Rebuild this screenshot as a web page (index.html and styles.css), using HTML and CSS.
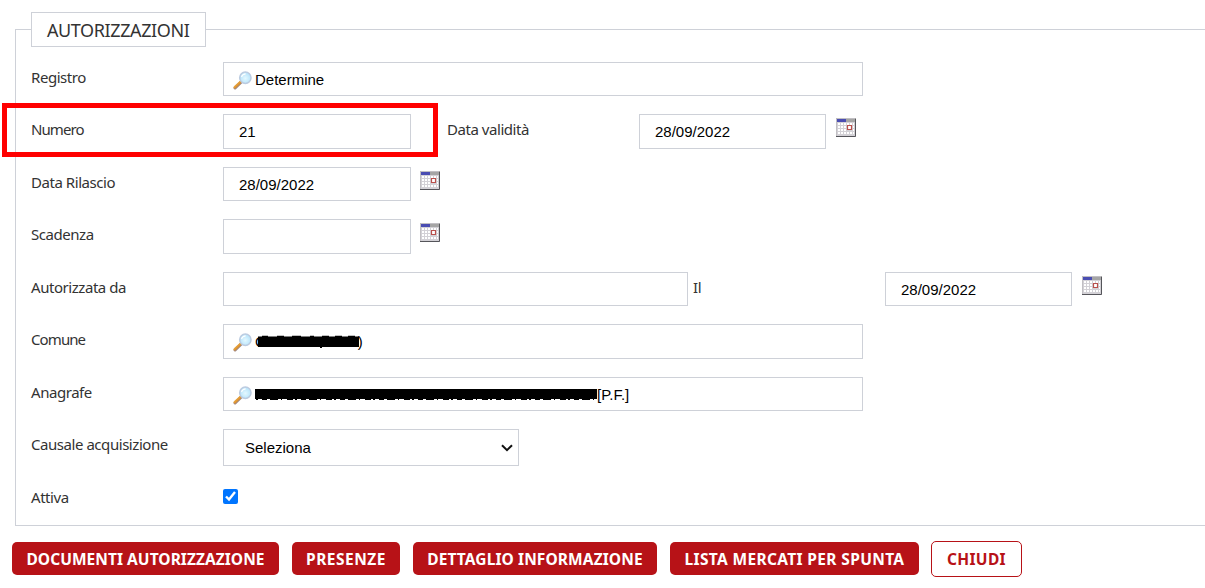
FILE: index.html
```html
<!DOCTYPE html>
<html lang="it">
<head>
<meta charset="utf-8">
<title>Autorizzazioni</title>
<link rel="stylesheet" href="styles.css">
</head>
<body>
<svg class="defs" width="0" height="0" aria-hidden="true">
  <defs>
    <linearGradient id="handle" x1="0" y1="0" x2="1" y2="1"><stop offset="0" stop-color="#f6c86d"/><stop offset=".55" stop-color="#e0952f"/><stop offset="1" stop-color="#a8713f"/></linearGradient>
    <radialGradient id="lens" cx=".5" cy=".55" r=".6"><stop offset="0" stop-color="#e4f8ff"/><stop offset="1" stop-color="#aee0fa"/></radialGradient>
    <symbol id="search" viewBox="0 0 18 18">
      <path d="M2 16L7.6 10.6" stroke="#a08a88" stroke-width="3" stroke-linecap="round"/>
      <path d="M1.7 15.4L7.4 10" stroke="url(#handle)" stroke-width="2.4" stroke-linecap="round"/>
      <circle cx="11.7" cy="6.4" r="5.4" fill="url(#lens)" stroke="#bccbe0" stroke-width="1.4"/>
      <path d="M8 5.7Q9 2.7 12 2.7" fill="none" stroke="#fff" stroke-width="1"/>
    </symbol>
    <symbol id="calendar" viewBox="0 0 20 19">
      <path fill="#d3d1d6" d="M0 0h20v19H0z"/>
      <path fill="#fff" d="M2 5h2v2H2zm3 0h2v2H5zm3 0h2v2H8zm3 0h2v2h-2zm3 0h2v2h-2zm3 0h1v2h-1zM2 8h2v2H2zm3 0h2v2H5zm3 0h2v2H8zm9 0h1v2h-1zM2 11h2v2H2zm3 0h2v2H5zm3 0h2v2H8zm9 0h1v2h-1zM2 14h2v2H2zm3 0h2v2H5zm3 0h2v2H8zm3 0h2v2h-2zm3 0h2v2h-2zm3 0h1v2h-1z"/>
      <path fill="#a5a5a5" d="M0 0h20v4H0z"/>
      <path fill="#4a4db2" d="M1 1h9v3H1z"/>
      <path fill="#fff" stroke="#b9504c" stroke-width="1.2" d="M11.5 7.5h4v4h-4z"/>
      <path fill="none" stroke="#c1bfc3" d="M.5 19V.5H19"/>
      <path fill="none" stroke="#55555a" d="M0 18.5h19.5V1"/>
    </symbol>
  </defs>
</svg>

<fieldset class="panel">
  <legend class="panel-title"><span>AUTORIZZAZIONI</span></legend>

  <div class="row">
    <label class="label">Registro</label>
    <div class="field lookup"><svg class="search"><use href="#search"/></svg><span>Determine</span></div>
  </div>

  <div class="row">
    <label class="label tight" for="numero">Numero</label>
    <input id="numero" class="field short raised" value="21">
    <label class="label second" for="validita">Data validità</label>
    <input id="validita" class="field date raised" value="28/09/2022">
    <svg class="calendar after-date"><use href="#calendar"/></svg>
    <div class="highlight"></div>
  </div>

  <div class="row">
    <label class="label" for="rilascio">Data Rilascio</label>
    <input id="rilascio" class="field short" value="28/09/2022">
    <svg class="calendar"><use href="#calendar"/></svg>
  </div>

  <div class="row">
    <label class="label" for="scadenza">Scadenza</label>
    <input id="scadenza" class="field short">
    <svg class="calendar"><use href="#calendar"/></svg>
  </div>

  <div class="row">
    <label class="label" for="autorizzata">Autorizzata da</label>
    <input id="autorizzata" class="field medium">
    <label class="label il" for="il">Il</label>
    <input id="il" class="field date" value="28/09/2022">
    <svg class="calendar after-date"><use href="#calendar"/></svg>
  </div>

  <div class="row">
    <label class="label tight">Comune</label>
    <div class="field lookup"><svg class="search"><use href="#search"/></svg><span class="masked">G<svg class="mask town" viewBox="0 0 101 13"><path d="M0 1.5h4v-.8h6v.8h9v-.8h7v.8h8v-.8h9v.8h9v-.8h4v.8h8v-.8h7v.8h6v-.8h7v.8h6v-.8h7v.8h4V12H64v1h-2v-1H0z"/></svg>)</span></div>
  </div>

  <div class="row">
    <label class="label">Anagrafe</label>
    <div class="field lookup"><svg class="search"><use href="#search"/></svg><span class="masked"><svg class="mask person" viewBox="0 0 342 13"><path d="M0 1h342v10H0z"/><path d="M1 11.5h340" stroke="#000" stroke-dasharray="2 4 5 3 8 3 1 5 6 2" /></svg>[P.F.]</span></div>
  </div>

  <div class="row">
    <label class="label" for="causale">Causale acquisizione</label>
    <div class="select-wrap">
      <select id="causale" class="field select"><option>Seleziona</option></select>
      <svg class="chevron" viewBox="0 0 12 8"><path d="M1 1.2L6 6.2L11 1.2" fill="none" stroke="#111" stroke-width="2"/></svg>
    </div>
  </div>

  <div class="row">
    <label class="label" for="attiva">Attiva</label>
    <input id="attiva" class="check" type="checkbox" checked>
  </div>
</fieldset>

<div class="actions">
  <button class="btn b-doc">DOCUMENTI AUTORIZZAZIONE</button>
  <button class="btn b-pres">PRESENZE</button>
  <button class="btn b-info">DETTAGLIO INFORMAZIONE</button>
  <button class="btn b-list">LISTA MERCATI PER SPUNTA</button>
  <button class="btn outline">CHIUDI</button>
</div>
</body>
</html>
```
FILE: styles.css
```css
* { box-sizing: border-box; }

body {
  margin: 0;
  height: 588px;
  overflow: hidden;
  background: #fff;
  color: #333;
  font-family: Tahoma, "Noto Sans", sans-serif;
  font-size: 15px;
}

.defs { display: block; height: 0; }

.panel {
  width: 1220px;
  height: 514px;
  margin: 12px 0 0 15px;
  padding: 14.9px 15px;
  border: 1px solid #ced1d8;
}

.panel-title {
  width: 175px;
  height: 35px;
  padding: 0 0 0 15px;
  border: 1px solid #ced1d8;
  font-size: 18px;
  line-height: 35px;
  white-space: nowrap;
  letter-spacing: -0.4px;
}

.row {
  position: relative;
  display: flex;
  align-items: flex-start;
  height: 52.5px;
}

.label {
  flex: none;
  width: 192px;
  line-height: 31px;
  letter-spacing: -0.45px;
  white-space: nowrap;
}

.tight { letter-spacing: -0.9px; }
.second { margin-left: 36px; }
.il { margin-left: 5px; }

.field {
  flex: none;
  height: 34.5px;
  margin: 0;
  padding: 1px 15px 0;
  border: 1px solid #ced1d8;
  border-radius: 0;
  background: #fff;
  color: #000;
  font: 15px "Liberation Sans", Arial, sans-serif;
}

.short { width: 188px; }
.date { width: 187px; }
.medium { width: 465px; }
.raised { padding-top: 0; }

.lookup {
  display: flex;
  align-items: center;
  gap: 3px;
  width: 640px;
  padding: 0 9px;
}

.search { width: 19px; height: 19px; margin-top: 2px; }

.masked { display: flex; align-items: center; }
.mask { display: block; height: 13px; }
.town { width: 101px; margin: 0 -1px 0 -9px; }
.person { width: 342px; }

.calendar { flex: none; width: 20px; height: 19px; margin: 4px 0 0 9px; }
.after-date { margin-left: 10px; }

.select-wrap { position: relative; width: 296px; }
.select { display: block; width: 296px; height: 37px; padding: 0 0 0 21px; appearance: none; }

.chevron {
  position: absolute;
  top: 15px;
  right: 6px;
  width: 12px;
  height: 8px;
  pointer-events: none;
}

.check { width: 15px; height: 15px; margin: 7px 0 0; accent-color: #0075ff; }

.highlight {
  position: absolute;
  top: -11.4px;
  left: -29px;
  width: 436px;
  height: 54px;
  border: 5px solid #f00;
}

.actions {
  display: flex;
  align-items: flex-start;
  gap: 13px;
  margin: 15px 0 0 12px;
}

.btn {
  height: 33px;
  margin: 1px 0 0;
  padding: 1px 0 0;
  border: 0;
  border-radius: 5px;
  background: #b71217;
  color: #fff;
  font: bold 15.5px Tahoma, "Noto Sans", sans-serif;
  white-space: nowrap;
}

.b-doc { width: 267px; letter-spacing: 0.05px; }
.b-pres { width: 108px; letter-spacing: 0.5px; }
.b-info { width: 244px; letter-spacing: 0.1px; }
.b-list { width: 249px; letter-spacing: 0.35px; }

.outline {
  width: 91px;
  height: 36px;
  margin: 0 0 0 -1px;
  padding: 0;
  border: 1px solid #b71217;
  background: #fff;
  color: #b71217;
  letter-spacing: 0.35px;
}
```
